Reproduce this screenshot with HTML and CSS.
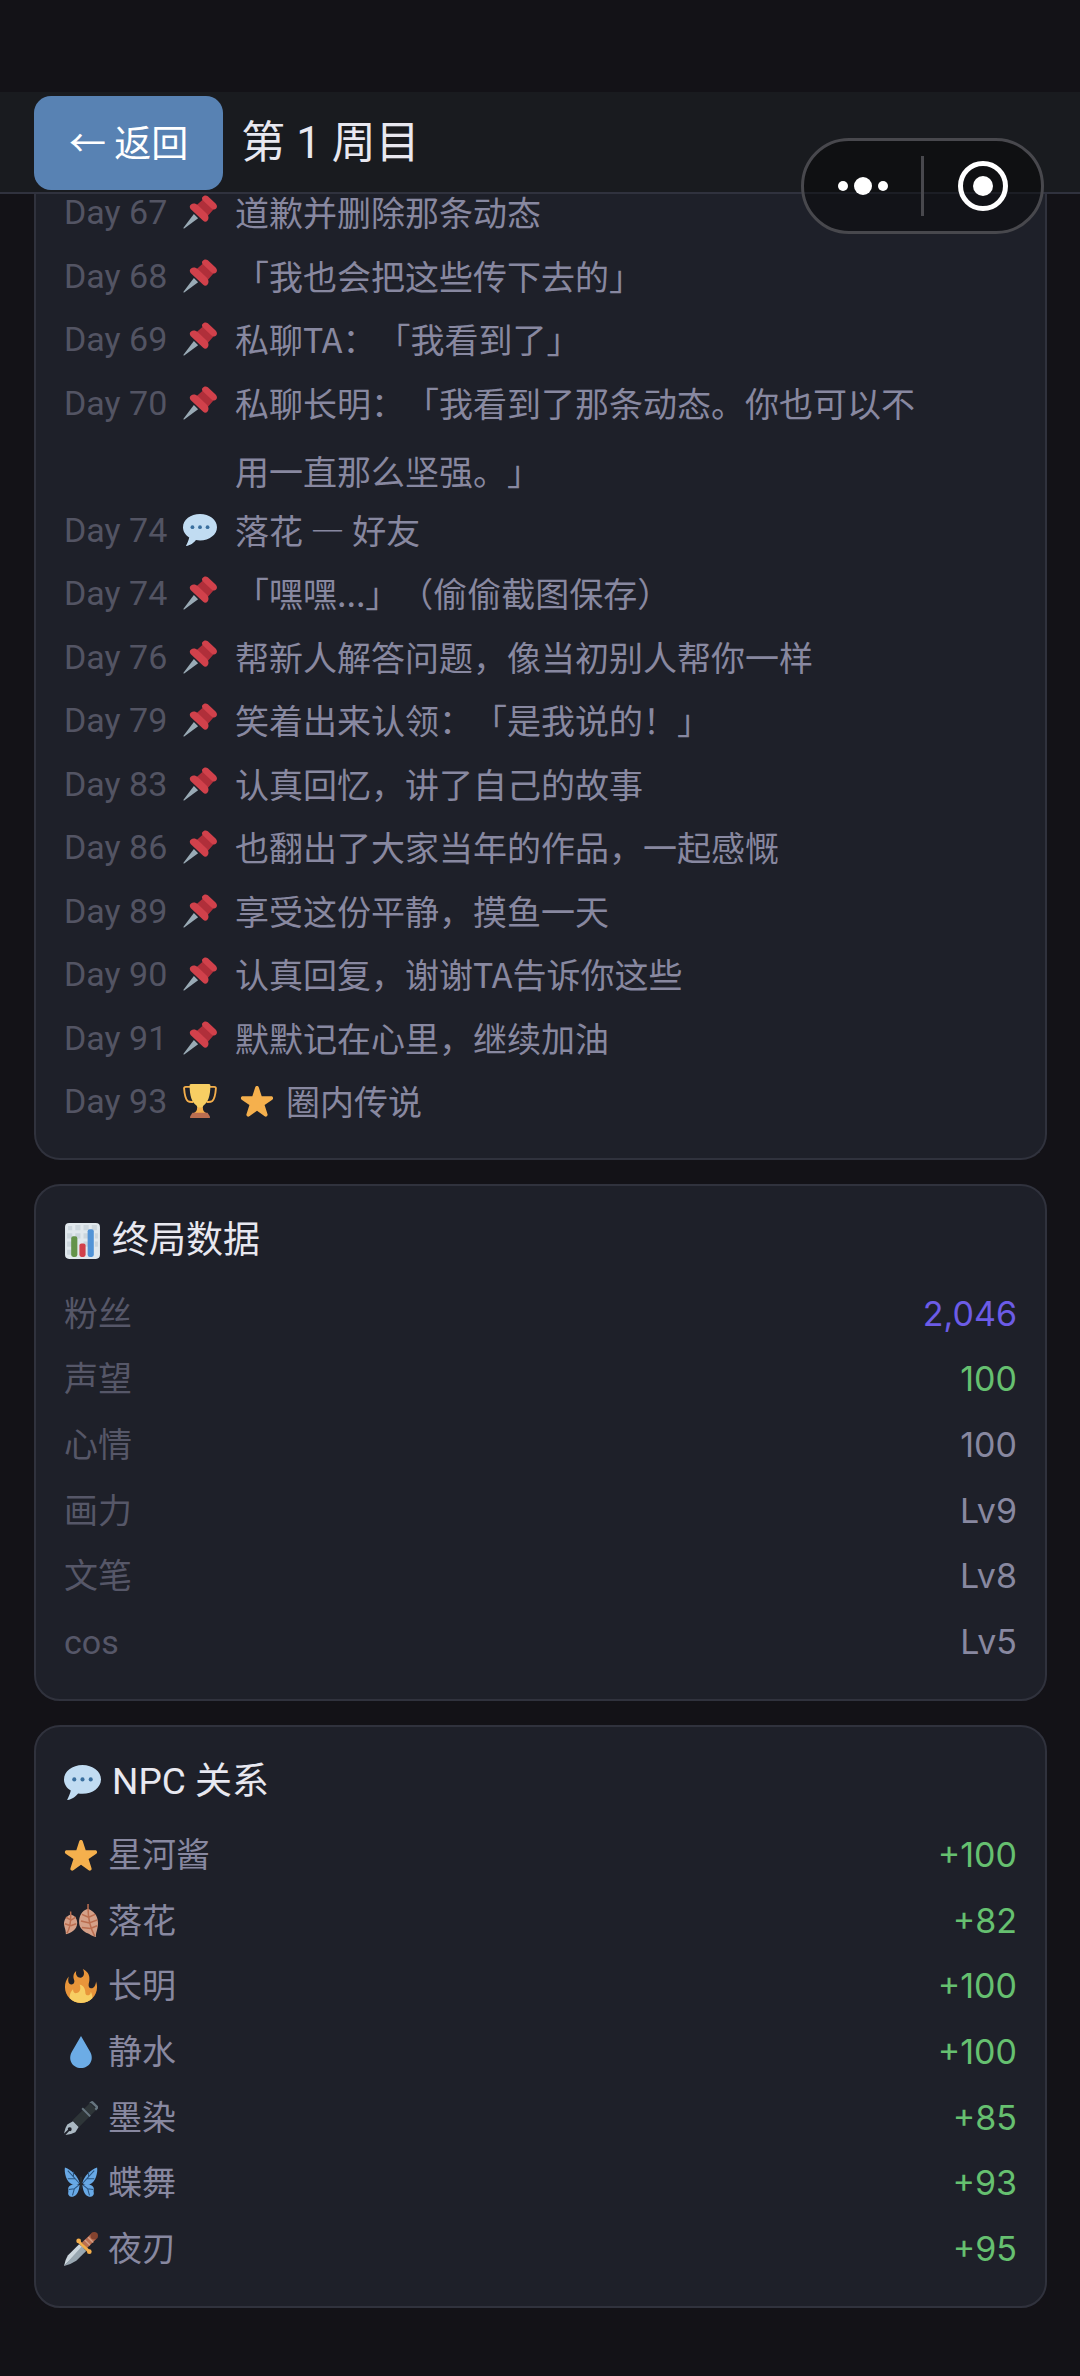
FILE: index.html
```html
<!DOCTYPE html>
<html lang="zh-CN">
<head>
<meta charset="utf-8">
<meta name="viewport" content="width=device-width, initial-scale=1">
<title>第 1 周目</title>
<link rel="stylesheet" href="styles.css">
</head>
<body>
<svg class="sprite" aria-hidden="true">
  <symbol id="pin" viewBox="0 0 36 36">
    <path fill="#99AAB5" d="M11.500 20L.5 34.800c-.3.700.1 1 .8.600L16 24.500z"/>
    <path fill="#B02F3A" d="M14 11l8-7 10.500 11-7 8z"/>
    <path fill="#D1414B" d="M20.500 2.300c1.500-2 3.900-2.600 5.800-.9l8.200 7.700c1.800 1.700 1.900 3.700.6 5.100-1.300 1.400-3.300 1.400-4.900 0l-8.700-8.100c-1.400-1.300-1.800-2.500-1-3.800zM8.500 10c2-1.600 5-1.300 7.300.9l8.900 8.300c2.500 2.400 3 5.500 1.300 7.700-1.300 1.600-3.100 1.700-4.600.4L8.300 15c-1.600-1.500-1.500-3.800.2-5z"/>
  </symbol>
  <symbol id="bubble" viewBox="0 0 36 36">
    <path fill="#C1DCF2" d="M18 1C8.059 1 0 7.268 0 15c0 4.368 2.574 8.268 6.604 10.835C6.080 28.144 4.859 31.569 3 35c5.758-.96 8.439-3.761 10.716-6.416C15.083 28.854 16.522 29 18 29c9.941 0 18-6.268 18-14S27.941 1 18 1z"/>
    <g fill="#3A6F9E"><circle cx="10" cy="15" r="2"/><circle cx="18" cy="15" r="2"/><circle cx="26" cy="15" r="2"/></g>
  </symbol>
  <symbol id="trophy" viewBox="0 0 36 36">
    <path fill="none" stroke="#F4AE4B" stroke-width="2" stroke-linejoin="round" d="M8 3H3Q.9 3 1.200 5C1.700 12 2.800 16 5 18c1.600 1.300 3.600 1 6 1M28 3h5q2.100 0 1.800 2c-.5 7-1.600 11-3.800 13-1.600 1.300-3.600 1-6 1"/>
    <path fill="#F7CE63" d="M7 1q0-1 2-1h18q2 0 2 1c0 12-2.500 18-7 21.500-1 1-1.500 2.500-1.500 6.500h-5c0-4-.5-5.500-1.500-6.500C9.500 19 7 13 7 1z"/>
    <path fill="#F4AE4B" d="M15 25h6c0 3 1 5 4 6H11c3-1 4-3 4-6z"/>
    <path fill="#BB6E50" d="M10 30.500h16l2.500 4v1.500h-21v-1.500z"/>
  </symbol>
  <symbol id="star" viewBox="0 0 36 36">
    <path fill="#F5B04D" d="M27.287 34.627c-.404 0-.806-.124-1.152-.371L18 28.422l-8.135 5.834c-.343.247-.745.371-1.147.371-.408 0-.818-.126-1.166-.380-.693-.504-.981-1.394-.719-2.206l3.155-9.781-8.225-5.655c-.690-.500-.982-1.393-.719-2.205.264-.812 1.022-1.360 1.874-1.360l10.146-.050 3.069-9.576C16.397 2.602 17.146 2.054 18 2.054c.856 0 1.603.548 1.867 1.360l3.121 9.576 10.074.050c.854 0 1.600.548 1.864 1.360.263.812-.028 1.705-.719 2.205l-8.164 5.655 3.110 9.781c.262.812-.027 1.702-.718 2.206-.344.254-.746.380-1.148.380z"/>
  </symbol>
  <symbol id="chart" viewBox="0 0 36 36">
    <rect x="1" width="34" height="35" rx="4" fill="#E1E8ED"/>
    <path fill="#CCD6DD" d="M4 3h4v4H4zM11 2h5v5h-5zM19 2h5v5h-5zM27 2h5v5h-5zM3 10h5v5H3zM11 10h5v5h-5zM19 10h5v5h-5zM3 18h5v5H3zM19 18h5v5h-5zM3 26h5v5H3zM30 10h3v5h-3zM30 18h3v5h-3z"/>
    <rect x="7" y="13" width="6" height="20" rx="2" fill="#64934A"/>
    <rect x="15" y="20" width="6" height="13" rx="2" fill="#D1414B"/>
    <rect x="23" y="6" width="6" height="27" rx="2" fill="#5293D6"/>
  </symbol>
  <symbol id="leaves" viewBox="0 0 36 36">
    <g fill="#D5A088">
      <path d="M25 5C19 7 15.500 13 16 20c.4 6 5 9 9 11 2 1 5 3 9 4-1-4 2-8 2-15 0-8-5-13-11-15z"/>
      <path d="M7 11C2 13 0 17 0 21c.2 4 2 6 2 11 5-1 12-5 12-12 0-5-3-8-7-9z"/>
    </g>
    <path fill="none" stroke="#BB6E50" stroke-width="1.600" d="M25.500 0c-.5 12 1.500 24 7 34M26 14l-7-3M26 14l7-3M27 20l-9-2M27 20l8-3M28 26l-9-1M28 26l7-3M7 8c.5 9 0 17-4 23M7.500 17L2 14M7.500 17l5-3M7 23l-6-2M7 23l6-2"/>
  </symbol>
  <symbol id="fire" viewBox="0 0 36 36">
    <path fill="#E8953A" d="M35 19c0-2.062-.367-4.039-1.040-5.868-.46 5.389-3.333 8.157-6.335 6.868-2.812-1.208-.917-5.917-.777-8.164.236-3.809-.012-8.169-6.931-11.794 2.875 5.500.333 8.917-2.333 9.125-2.958.231-5.667-2.542-4.667-7.042-3.238 2.386-3.332 6.402-2.333 9 1.042 2.708-.042 4.958-2.583 5.208-2.840.280-4.418-3.041-2.963-8.333C2.520 10.965 1 14.805 1 19c0 9.389 7.611 17 17 17s17-7.611 17-17z"/>
    <path fill="#F7CE63" d="M28.394 23.999c.148 3.084-2.561 4.293-4.019 3.709-2.106-.843-1.541-2.291-2.083-5.291s-2.625-5.083-5.708-6c2.250 6.333-1.247 8.667-3.080 9.084-1.872.426-3.753-.001-3.968-4.007C7.352 23.668 6 26.676 6 30c0 .368.023.730.055 1.090C9.125 34.124 13.342 36 18 36s8.875-1.876 11.945-4.910c.032-.360.055-.722.055-1.090 0-2.187-.584-4.236-1.606-6.001z"/>
  </symbol>
  <symbol id="drop" viewBox="0 0 36 36">
    <path fill="#6CACE6" d="M18 1L8.500 17.500C3.500 26 9 35 18 35s14.500-9 9.500-17.500z"/>
  </symbol>
  <symbol id="pen" viewBox="0 0 36 36">
    <path fill="#2E3538" d="M9 20.500L27.500 2 34.500 9 16 27.500z"/>
    <path fill="#66757F" d="M26.500 2.500L28.500.5q1.500-1 3 .5l4 4q1.500 1.500.5 3l-2 2-1.500-1.500 1-2L28.500 2zM18.500 8.500L20 7l8.500 8.500L27 17z"/>
    <path fill="#AAB8C2" d="M9.500 21.500l6 6-3.500 5.500Q8 35 1.500 36L5.500 31.800a2 2 0 1 0-1.300-1.300L0 34.500q1-6 3.500-9.500z"/>
  </symbol>
  <symbol id="butterfly" viewBox="0 0 36 36">
    <g fill="#68A9E6">
      <path d="M16.500 18C15 11 8 4 1 1.500 0 6 2 17 9 19.500c3 .7 5.500.3 7.500-1.500zM16.500 20C12 18.500 5 20 4.500 23.500c-.3 2 .5 2.500 0 4.500-.6 3 2 5 5 4.500C14 31 16 26 16.500 20z"/>
      <path d="M19.500 18C21 11 28 4 35 1.500 36 6 34 17 27 19.500c-3 .7-5.500.3-7.500-1.500zM19.500 20C24 18.500 31 20 31.500 23.500c.3 2-.5 2.500 0 4.500.6 3-2 5-5 4.500C22 31 20 26 19.500 20z"/>
    </g>
    <path fill="none" stroke="#2A5580" stroke-width="1.100" d="M16 18L4 5M12 13.500H4M10 11V6M16 20l-5 4-6 1M11 24l-2 7M20 18L32 5M24 13.500h8M26 11V6M20 20l5 4 6 1M25 24l2 7"/>
    <path stroke="#292F33" stroke-width="1.800" stroke-linecap="round" d="M18 12v12"/>
  </symbol>
  <symbol id="dagger" viewBox="0 0 36 36">
    <path fill="#CCD6DD" d="M16 13L4 25Q1 30 0 36L20.500 16.500z"/>
    <path fill="#99A7B1" d="M19 15l4.500 5L13 30.500Q7 34.500 0 36z"/>
    <path fill="#BB6E50" d="M19 11L28.500 2l5.500 5.500-9.500 9.500z"/>
    <path stroke="#D5A088" stroke-width="1.500" d="M22 8.500l5.500 5.500M25.500 5.500l5.500 5.500"/>
    <circle cx="32" cy="4" r="4" fill="#84432F"/>
    <path stroke="#F4AE4B" stroke-width="3" stroke-linecap="round" d="M15.500 10L26.500 20.500"/>
    <circle cx="15.500" cy="9.500" r="2.500" fill="#F4AE4B"/><circle cx="26.800" cy="20.800" r="2.500" fill="#F4AE4B"/>
  </symbol>
</svg>

<header class="topbar">
  <button class="back" type="button">← 返回</button>
  <h1 class="title">第 1 周目</h1>
</header>

<div class="capsule">
  <button class="capsule-btn" type="button" aria-label="更多">
    <svg width="52" height="20" viewBox="0 0 52 20" fill="#fff"><circle cx="6" cy="10" r="5"/><circle cx="26" cy="10" r="9"/><circle cx="46" cy="10" r="5"/></svg>
  </button>
  <span class="capsule-line"></span>
  <button class="capsule-btn" type="button" aria-label="关闭">
    <svg width="50" height="50" viewBox="0 0 50 50"><circle cx="25" cy="25" r="22.500" fill="none" stroke="#fff" stroke-width="5"/><circle cx="25" cy="25" r="10" fill="#fff"/></svg>
  </button>
</div>

<main class="page">
  <section class="card card-log">
    <ol class="log">
      <li class="entry"><span class="day">Day 67</span><svg class="icon"><use href="#pin"/></svg><p class="desc">道歉并删除那条动态</p></li>
      <li class="entry"><span class="day">Day 68</span><svg class="icon"><use href="#pin"/></svg><p class="desc">「我也会把这些传下去的」</p></li>
      <li class="entry"><span class="day">Day 69</span><svg class="icon"><use href="#pin"/></svg><p class="desc">私聊TA：「我看到了」</p></li>
      <li class="entry entry-double"><span class="day">Day 70</span><svg class="icon"><use href="#pin"/></svg><p class="desc">私聊长明：「我看到了那条动态。你也可以不用一直那么坚强。」</p></li>
      <li class="entry"><span class="day">Day 74</span><svg class="icon"><use href="#bubble"/></svg><p class="desc">落花 — 好友</p></li>
      <li class="entry"><span class="day">Day 74</span><svg class="icon"><use href="#pin"/></svg><p class="desc">「嘿嘿...」（偷偷截图保存）</p></li>
      <li class="entry"><span class="day">Day 76</span><svg class="icon"><use href="#pin"/></svg><p class="desc">帮新人解答问题，像当初别人帮你一样</p></li>
      <li class="entry"><span class="day">Day 79</span><svg class="icon"><use href="#pin"/></svg><p class="desc">笑着出来认领：「是我说的！」</p></li>
      <li class="entry"><span class="day">Day 83</span><svg class="icon"><use href="#pin"/></svg><p class="desc">认真回忆，讲了自己的故事</p></li>
      <li class="entry"><span class="day">Day 86</span><svg class="icon"><use href="#pin"/></svg><p class="desc">也翻出了大家当年的作品，一起感慨</p></li>
      <li class="entry"><span class="day">Day 89</span><svg class="icon"><use href="#pin"/></svg><p class="desc">享受这份平静，摸鱼一天</p></li>
      <li class="entry"><span class="day">Day 90</span><svg class="icon"><use href="#pin"/></svg><p class="desc">认真回复，谢谢TA告诉你这些</p></li>
      <li class="entry"><span class="day">Day 91</span><svg class="icon"><use href="#pin"/></svg><p class="desc">默默记在心里，继续加油</p></li>
      <li class="entry"><span class="day">Day 93</span><svg class="icon"><use href="#trophy"/></svg><p class="desc desc-award"><svg class="icon"><use href="#star"/></svg>圈内传说</p></li>
    </ol>
  </section>

  <section class="card">
    <h2 class="heading"><svg class="heading-icon"><use href="#chart"/></svg>终局数据</h2>
    <dl class="stats stats-final">
      <div class="stat"><dt class="label">粉丝</dt><dd class="value value-fans">2,046</dd></div>
      <div class="stat"><dt class="label">声望</dt><dd class="value value-good">100</dd></div>
      <div class="stat"><dt class="label">心情</dt><dd class="value">100</dd></div>
      <div class="stat"><dt class="label">画力</dt><dd class="value">Lv9</dd></div>
      <div class="stat"><dt class="label">文笔</dt><dd class="value">Lv8</dd></div>
      <div class="stat"><dt class="label">cos</dt><dd class="value">Lv5</dd></div>
    </dl>
  </section>

  <section class="card">
    <h2 class="heading"><svg class="heading-icon"><use href="#bubble"/></svg>NPC 关系</h2>
    <dl class="stats stats-npc">
      <div class="stat"><dt class="label npc"><svg class="icon"><use href="#star"/></svg>星河酱</dt><dd class="value value-good">+100</dd></div>
      <div class="stat"><dt class="label npc"><svg class="icon"><use href="#leaves"/></svg>落花</dt><dd class="value value-good">+82</dd></div>
      <div class="stat"><dt class="label npc"><svg class="icon"><use href="#fire"/></svg>长明</dt><dd class="value value-good">+100</dd></div>
      <div class="stat"><dt class="label npc"><svg class="icon"><use href="#drop"/></svg>静水</dt><dd class="value value-good">+100</dd></div>
      <div class="stat"><dt class="label npc"><svg class="icon"><use href="#pen"/></svg>墨染</dt><dd class="value value-good">+85</dd></div>
      <div class="stat"><dt class="label npc"><svg class="icon"><use href="#butterfly"/></svg>蝶舞</dt><dd class="value value-good">+93</dd></div>
      <div class="stat"><dt class="label npc"><svg class="icon"><use href="#dagger"/></svg>夜刃</dt><dd class="value value-good">+95</dd></div>
    </dl>
  </section>
</main>
</body>
</html>
```

FILE: styles.css
```css
* {
  box-sizing: border-box;
  margin: 0;
  padding: 0;
}

html {
  background: #131217;
}

body {
  padding-top: 92px;
  font-family: Roboto, "Noto Sans CJK SC", sans-serif;
  font-size: 34px;
  font-weight: 400;
  color: #8888a0;
  text-spacing-trim: space-all;
}

.sprite {
  position: absolute;
  width: 0;
  height: 0;
}

/* Top bar */
.topbar {
  position: sticky;
  top: 0;
  z-index: 1;
  display: flex;
  align-items: center;
  gap: 18px;
  padding: 4px 34px 2px;
  background: #191b1f;
  border-bottom: 2px solid #30323e;
}

.back {
  height: 94px;
  padding: 0 35px 4px;
  border: 0;
  border-radius: 17px;
  background: #5882b3;
  color: #fff;
  font-family: "Noto Sans CJK SC", sans-serif;
  font-size: 37px;
  line-height: 54px;
}

.title {
  font-size: 44px;
  font-weight: 400;
  line-height: 60px;
  color: #e8e8f0;
}

/* Floating menu capsule */
.capsule {
  position: absolute;
  top: 138px;
  right: 36px;
  z-index: 2;
  display: flex;
  align-items: center;
  width: 243px;
  height: 96px;
  border: 3px solid #48484d;
  border-radius: 48px;
  background: rgba(0, 0, 0, 0.4);
}

.capsule-btn {
  display: flex;
  flex: 1;
  align-items: center;
  justify-content: center;
  height: 100%;
  border: 0;
  background: none;
}

.capsule-line {
  width: 3px;
  height: 60px;
  background: #48484d;
}

/* Cards */
.page {
  display: flex;
  flex-direction: column;
  gap: 24px;
  padding: 0 33px 68px 34px;
}

.card {
  padding: 26px 28px 24px;
  border: 2px solid #30323d;
  border-radius: 26px;
  background: #1e2029;
}

.card-log {
  margin-top: -11px;
  padding-top: 0;
  padding-bottom: 22px;
  border-top: 0;
  border-radius: 0 0 26px 26px;
}

.icon {
  flex: none;
  width: 34px;
  height: 34px;
}

/* Timeline */
.log {
  display: grid;
  grid-auto-rows: minmax(0, 1fr);
  min-height: 953px;
  list-style: none;
}

.entry {
  display: grid;
  grid-template-columns: 101px 34px minmax(0, 694px);
  align-items: start;
  gap: 18px;
  line-height: 58px;
}

.entry-double {
  grid-row: span 2;
}

.entry > .icon {
  margin-top: 12px;
}

.day {
  color: #535463;
  white-space: nowrap;
}

.desc {
  margin: -5px 0;
  font-family: "Noto Sans CJK SC", sans-serif;
  line-height: 68px;
}

.desc-award {
  display: flex;
  align-items: center;
  gap: 12px;
  padding-left: 5px;
}

/* Section heading */
.heading {
  display: flex;
  align-items: center;
  gap: 11px;
  margin-bottom: 11px;
  font-size: 37px;
  font-weight: 400;
  line-height: 58px;
  color: #e8e8f0;
}

.heading-icon {
  width: 37px;
  height: 37px;
}

/* Label and value rows */
.stats {
  display: grid;
  grid-auto-rows: minmax(0, 1fr);
}

.stats-final {
  min-height: 394px;
}

.stats-npc {
  min-height: 460px;
}

.stat {
  display: flex;
  align-items: center;
  justify-content: space-between;
  line-height: 58px;
}

.label {
  color: #565768;
}

.npc {
  display: flex;
  align-items: center;
  gap: 10px;
  color: #8888a0;
}

.value {
  font-family: Inter, "Noto Sans CJK SC", sans-serif;
  font-size: 34px;
}

.value-fans {
  color: #6c5ce7;
}

.value-good {
  color: #66c070;
}
```
